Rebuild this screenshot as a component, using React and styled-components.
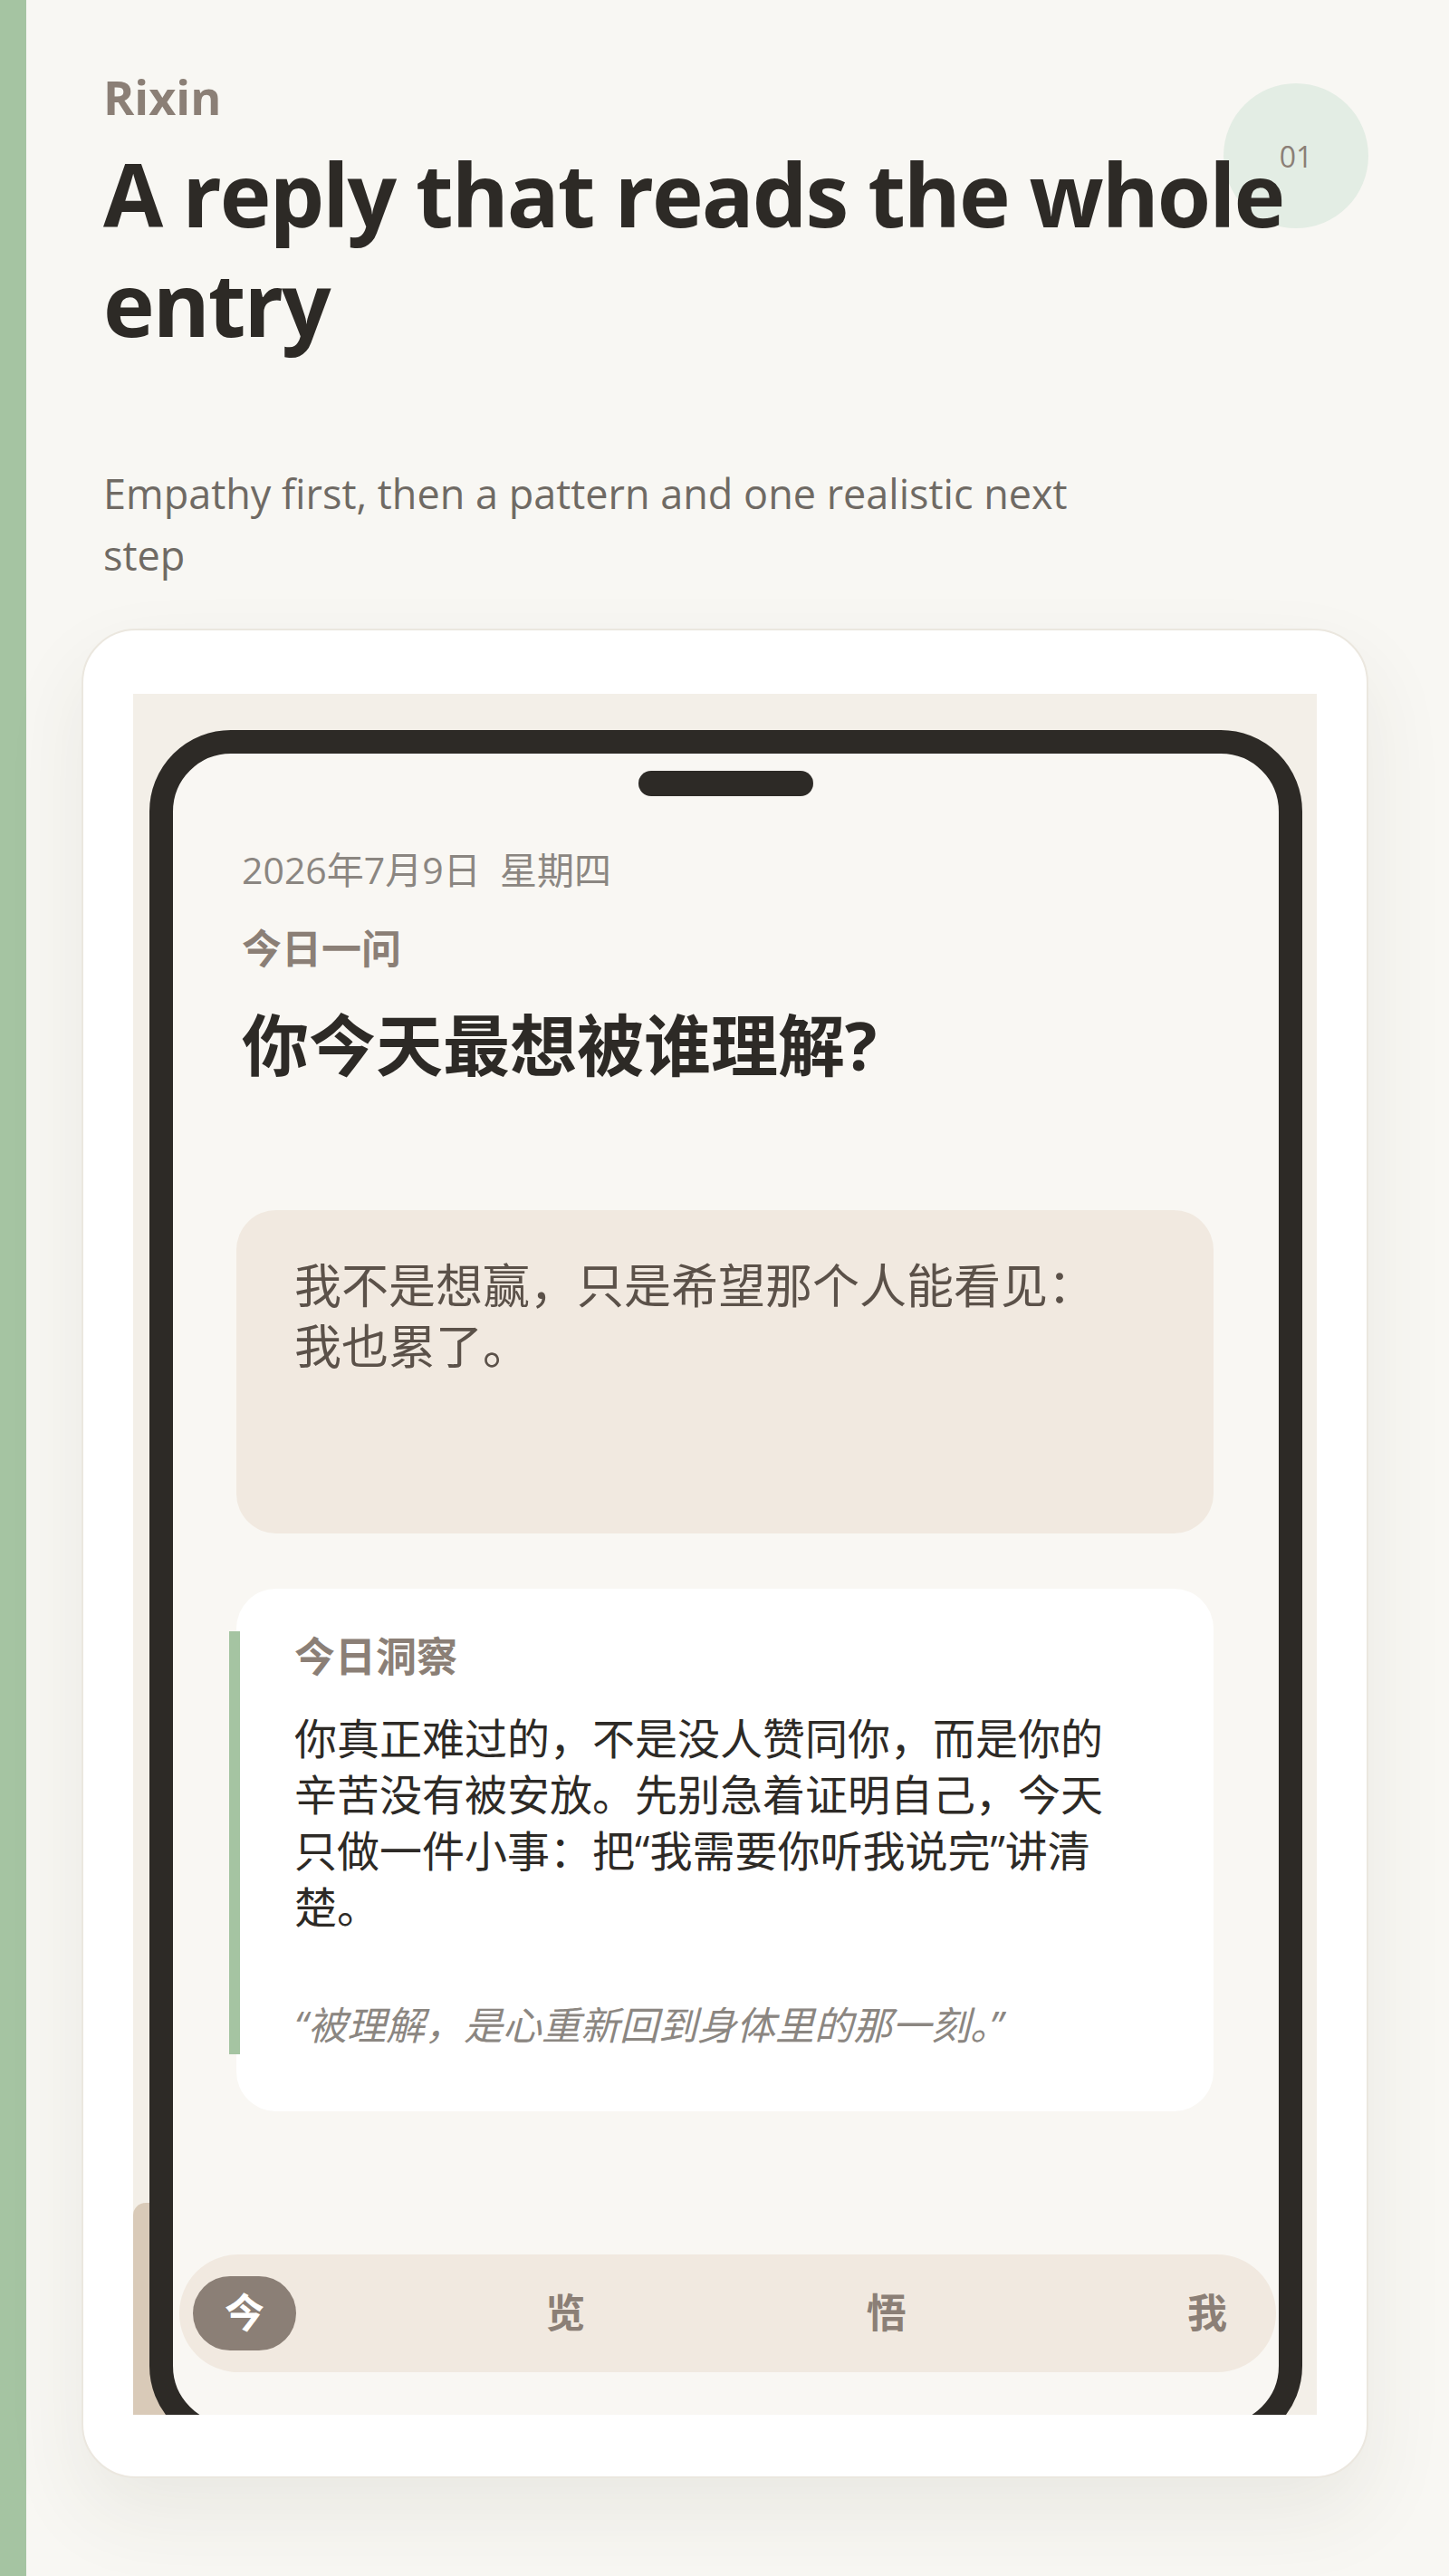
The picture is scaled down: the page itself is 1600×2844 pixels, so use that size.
import React from "react";
import styled, { createGlobalStyle } from "styled-components";

const GlobalStyle = createGlobalStyle`
  * {
    box-sizing: border-box;
  }

  body {
    margin: 0;
    background: #f8f7f3;
    font-family: "Open Sans", "Noto Sans CJK SC", sans-serif;
    color: #2d2a26;
  }
`;

const Page = styled.div`
  display: flex;
  min-height: 2844px;
`;

const Stripe = styled.div`
  flex: 0 0 29px;
  background: #a5c4a2;
`;

const Main = styled.main`
  flex: 1;
  padding: 74px 89px 107px 61px;
`;

const Header = styled.header`
  position: relative;
  padding-left: 24px;
`;

const Brand = styled.div`
  font-size: 52px;
  line-height: 1.25;
  font-weight: 700;
  color: #8b7f76;
`;

const Title = styled.h1`
  position: relative;
  z-index: 1;
  margin: 14px 0 0;
  font-size: 96px;
  line-height: 121px;
  font-weight: 700;
  letter-spacing: -2px;
  color: #2d2a26;
`;

const Badge = styled.div`
  position: absolute;
  top: 18px;
  right: 0;
  width: 160px;
  height: 160px;
  border-radius: 50%;
  background: #e3ede4;
  display: flex;
  align-items: center;
  justify-content: center;
  font-size: 32px;
  color: #8b7f76;
`;

const Subtitle = styled.p`
  margin: 116px 0 0;
  max-width: 1120px;
  font-size: 45px;
  line-height: 68px;
  color: #6f6a64;
`;

const Card = styled.section`
  margin-top: 47px;
  background: #ffffff;
  border: 2px solid #ebe7df;
  border-radius: 60px;
  padding: 70px 55px 68px;
  box-shadow: 0 40px 90px rgba(70, 60, 40, 0.08);
`;

const Stage = styled.div`
  position: relative;
  height: 1900px;
  overflow: hidden;
  background: #f3efe8;
  padding: 40px 16px 0 18px;
`;

const StageDeco = styled.div`
  position: absolute;
  left: 0;
  top: 1666px;
  width: 80px;
  height: 320px;
  border-top-left-radius: 14px;
  background: #d9cab8;
`;

const Phone = styled.div`
  position: relative;
  z-index: 1;
  height: 1896px;
  border: 26px solid #2d2a26;
  border-radius: 90px;
  background: #f9f7f3;
  display: flex;
  flex-direction: column;
`;

const Notch = styled.div`
  width: 193px;
  height: 28px;
  margin: 19px auto 0;
  border-radius: 14px;
  background: #2d2a26;
`;

const Screen = styled.div`
  flex: 1;
  display: flex;
  flex-direction: column;
  padding: 0 72px 0 70px;
`;

const Intro = styled.div`
  padding-left: 6px;
`;

const DateLine = styled.div`
  margin-top: 52px;
  font-size: 41px;
  line-height: 58px;
  color: #8b8681;
  white-space: pre;
`;

const Label = styled.div`
  margin-top: ${(p) => p.$gap || 0}px;
  font-size: ${(p) => p.$size || 44}px;
  line-height: 56px;
  font-weight: 700;
  color: #8b7f76;
`;

const Question = styled.h2`
  margin: 32px 0 0;
  font-size: 74px;
  line-height: 94px;
  font-weight: 700;
  color: #2d2a26;
`;

const EntryBox = styled.div`
  margin-top: 135px;
  height: 357px;
  border-radius: 44px;
  background: #f1e9e0;
  padding: 49px 64px 40px;
  font-size: 52px;
  line-height: 67px;
  color: #5b5149;
`;

const InsightCard = styled.div`
  margin-top: 61px;
  height: 577px;
  border-radius: 44px;
  background: #ffffff;
  padding-top: 47px;
`;

const InsightBody = styled.div`
  margin-left: -8px;
  border-left: 12px solid #a5c4a2;
  padding: 0 0 5px 60px;
`;

const InsightText = styled.p`
  margin: 31px 0 0;
  max-width: 915px;
  font-size: 47px;
  line-height: 62px;
  color: #2d2a26;
`;

const Quote = styled.p`
  margin: 73px 0 0;
  font-size: 43px;
  line-height: 54px;
  font-style: italic;
  color: #8b8681;
`;

const TabBar = styled.nav`
  margin: auto -69px 57px -63px;
  height: 130px;
  border-radius: 65px;
  background: #f1e9e0;
  padding: 0 19px 0 15px;
  display: flex;
  align-items: center;
  justify-content: space-between;
`;

const Tab = styled.div`
  width: 114px;
  height: 82px;
  border-radius: 41px;
  padding-bottom: 7px;
  display: flex;
  align-items: center;
  justify-content: center;
  font-size: 44px;
  font-weight: 700;
  color: ${(p) => (p.$active ? "#ffffff" : "#8b7f76")};
  background: ${(p) => (p.$active ? "#8b7f76" : "transparent")};
`;

const tabs = ["今", "览", "悟", "我"];

export default function App() {
  return (
    <>
      <GlobalStyle />
      <Page>
        <Stripe />
        <Main>
          <Header>
            <Badge>01</Badge>
            <Brand>Rixin</Brand>
            <Title>A reply that reads the whole entry</Title>
            <Subtitle>
              Empathy first, then a pattern and one realistic next step
            </Subtitle>
          </Header>

          <Card>
            <Stage>
              <StageDeco />
              <Phone>
                <Notch />
                <Screen>
                  <Intro>
                    <DateLine>{"2026年7月9日  星期四"}</DateLine>
                    <Label $gap={30}>今日一问</Label>
                    <Question>你今天最想被谁理解?</Question>
                  </Intro>

                  <EntryBox>
                    我不是想赢，只是希望那个人能看见：
                    <br />
                    我也累了。
                  </EntryBox>

                  <InsightCard>
                    <InsightBody>
                      <Label $size={45}>今日洞察</Label>
                      <InsightText>
                        你真正难过的，不是没人赞同你，而是你的辛苦没有被安放。先别急着证明自己，今天只做一件小事：把“我需要你听我说完”讲清楚。
                      </InsightText>
                      <Quote>“被理解，是心重新回到身体里的那一刻。”</Quote>
                    </InsightBody>
                  </InsightCard>

                  <TabBar>
                    {tabs.map((t, i) => (
                      <Tab key={t} $active={i === 0}>
                        {t}
                      </Tab>
                    ))}
                  </TabBar>
                </Screen>
              </Phone>
            </Stage>
          </Card>
        </Main>
      </Page>
    </>
  );
}
